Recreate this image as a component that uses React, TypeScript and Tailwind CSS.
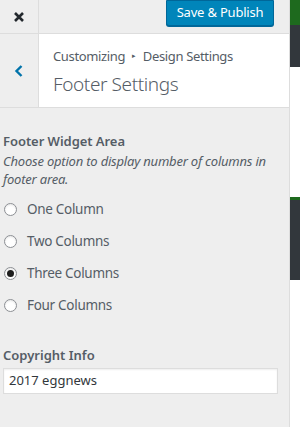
import React from "react";

function Radio({ label, checked }: { label: string; checked?: boolean }) {
  return (
    <div className="flex items-center h-[32px]">
      <span className="ml-[4px] w-[13px] h-[13px] rounded-full border border-[#8c8f94] bg-white flex items-center justify-center shadow-[inset_0_1px_2px_rgba(0,0,0,0.1)]">
        {checked && <span className="w-[7px] h-[7px] rounded-full bg-[#1e1e1e]" />}
      </span>
      <span className="ml-[10px] text-[13.5px] tracking-[-0.3px] text-[#555d66]">{label}</span>
    </div>
  );
}

export default function App() {
  return (
    <div className="w-[300px] h-[427px] flex bg-white overflow-hidden" style={{ fontFamily: '"Noto Sans", "Open Sans", sans-serif' }}>
      <div className="w-[290px] h-full bg-[#eeeeee] border-r border-[#dddddd] flex flex-col">
        <div className="h-[34px] flex border-b border-[#dddddd]">
          <div className="w-[39px] border-r border-[#dddddd] flex items-center justify-center">
            <svg width="12" height="12" viewBox="0 0 12 12">
              <path d="M2 2 L10 10 M10 2 L2 10" stroke="#23282d" strokeWidth="2.6" strokeLinecap="butt" />
            </svg>
          </div>
          <div className="flex-1 flex justify-end pr-[15px]">
            <div className="h-[26px] w-[108px] bg-[#0085ba] border border-[#006799] rounded-b-[3px] text-white text-[13px] tracking-[-0.2px] flex items-center justify-center shadow-[0_1px_0_#006799]">
              Save &amp; Publish
            </div>
          </div>
        </div>
        <div className="h-[74px] flex border-b border-[#dddddd]">
          <div className="w-[39px] border-r border-[#dddddd] flex items-center justify-center">
            <svg width="10" height="14" viewBox="0 0 10 14">
              <path d="M7.5 2 L2.5 7 L7.5 12" stroke="#0073aa" strokeWidth="2.4" fill="none" />
            </svg>
          </div>
          <div className="flex-1 bg-white pl-[14px] pt-[13px]">
            <div className="text-[13px] tracking-[-0.35px] text-[#555d66] leading-[18px] flex items-center">
              Customizing
              <span className="mx-[7px] text-[7px]">▸</span>
              Design Settings
            </div>
            <div className="text-[19px] tracking-[-0.4px] text-[#555d66] leading-[26px] mt-[6px] font-light">Footer Settings</div>
          </div>
        </div>
        <div className="px-[3px] pt-[23px]">
          <div className="text-[13px] font-semibold tracking-[-0.05px] text-[#555d66] leading-[20px]">Footer Widget Area</div>
          <div className="text-[13px] italic tracking-[-0.2px] text-[#555d66] leading-[18px] mt-[1px]">
            Choose option to display number of columns in footer area.
          </div>
        </div>
        <div className="mt-[5px]">
          <Radio label="One Column" />
          <Radio label="Two Columns" />
          <Radio label="Three Columns" checked />
          <Radio label="Four Columns" />
        </div>
        <div className="px-[3px] mt-[24px]">
          <div className="text-[13px] font-semibold text-[#555d66] leading-[20px]">Copyright Info</div>
          <div className="mt-[3px] w-[275px] h-[26px] bg-white border border-[#dddddd] shadow-[inset_0_1px_2px_rgba(0,0,0,0.07)] flex items-center px-[5px] text-[13px] text-[#32373c]">
            2017 eggnews
          </div>
        </div>
      </div>
      <div className="flex-1 flex flex-col">
        <div className="h-[25px] bg-[#1e6a1e]" />
        <div className="h-[42px] bg-[#32373c]" />
        <div className="h-[130px] bg-white" />
        <div className="h-[3px] bg-[#1e6a1e]" />
        <div className="h-[80px] bg-[#32373c]" />
        <div className="flex-1 bg-white" />
      </div>
    </div>
  );
}
